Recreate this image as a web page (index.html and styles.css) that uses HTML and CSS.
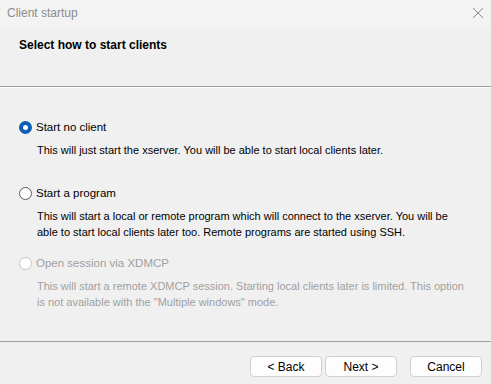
FILE: index.html
```html
<!DOCTYPE html>
<html>
<head>
    <meta charset="utf-8" />
    <title>Client startup</title>
    <link rel="stylesheet" href="styles.css">
</head>
<body>
    <div id="dialog">
        <div id="titlebar">
            <span class="title">Client startup</span>
            <svg class="close" width="12" height="12" viewBox="0 0 12 12">
                <path d="M1 1 L11 11 M11 1 L1 11" stroke="#8a8a8a" stroke-width="1" fill="none" />
            </svg>
        </div>

        <div id="header">
            <h1>Select how to start clients</h1>
        </div>

        <div id="options">
            <div class="option first">
                <label><span class="radio checked"></span>Start no client</label>
                <p>This will just start the xserver. You will be able to start local clients later.</p>
            </div>
            <div class="option">
                <label><span class="radio"></span>Start a program</label>
                <p>This will start a local or remote program which will connect to the xserver. You will be<br>able to start local clients later too. Remote programs are started using SSH.</p>
            </div>
            <div class="option disabled">
                <label><span class="radio"></span>Open session via XDMCP</label>
                <p>This will start a remote XDMCP session. Starting local clients later is limited. This option<br>is not available with the "Multiple windows" mode.</p>
            </div>
        </div>

        <div id="footer">
            <button>&lt; Back</button>
            <button>Next &gt;</button>
            <button class="cancel">Cancel</button>
        </div>
    </div>
</body>
</html>
```

FILE: styles.css
```css
* { margin: 0; border: 0; padding: 0; box-sizing: border-box; }

body {
    background: #f0f0f0;
    font-family: "Liberation Sans", Arial, sans-serif;
    font-size: 11px;
    color: #000;
}

#dialog {
    width: 491px;
    height: 384px;
    display: flex;
    flex-direction: column;
}

#titlebar {
    height: 27px;
    background: #f3f3f3;
    display: flex;
    align-items: center;
    justify-content: space-between;
    padding: 0 7px 2px 7px;
}

#titlebar .title {
    font-size: 12px;
    color: #8c8c8c;
}

#header {
    height: 60px;
    padding: 11px 0 0 19px;
    border-bottom: 1px solid #a0a0a0;
    box-shadow: 0 1px 0 #ffffff;
}

#header h1 {
    font-size: 12px;
    font-weight: bold;
    color: #000;
}

#options {
    flex: 1;
    padding: 33px 0 0 19px;
    border-bottom: 1px solid #a0a0a0;
}

.option { height: 70px; }
.option.first { height: 66px; }

.option label {
    display: flex;
    align-items: center;
    gap: 4px;
    font-size: 11.5px;
    height: 14px;
}

.radio {
    width: 13px;
    height: 13px;
    border-radius: 50%;
    border: 1px solid #5a5a5a;
    background: #fff;
}

.radio.checked {
    border: 4px solid #0a5fb4;
    background: #fff;
}

.option p {
    margin: 8px 0 0 18px;
    line-height: 16px;
}

.option.disabled { color: #a0a0a0; }
.option.disabled .radio { border-color: #c4c4c4; }

#footer {
    height: 42px;
    display: flex;
    align-items: center;
    justify-content: flex-end;
    padding: 7px 9px 0 0;
    gap: 3px;
}

#footer button {
    width: 72px;
    height: 21px;
    background: #fdfdfd;
    border: 1px solid #d0d0d0;
    border-radius: 4px;
    font-family: "Liberation Sans", Arial, sans-serif;
    font-size: 12px;
    color: #000;
}

#footer button.cancel { margin-left: 10px; }
```
